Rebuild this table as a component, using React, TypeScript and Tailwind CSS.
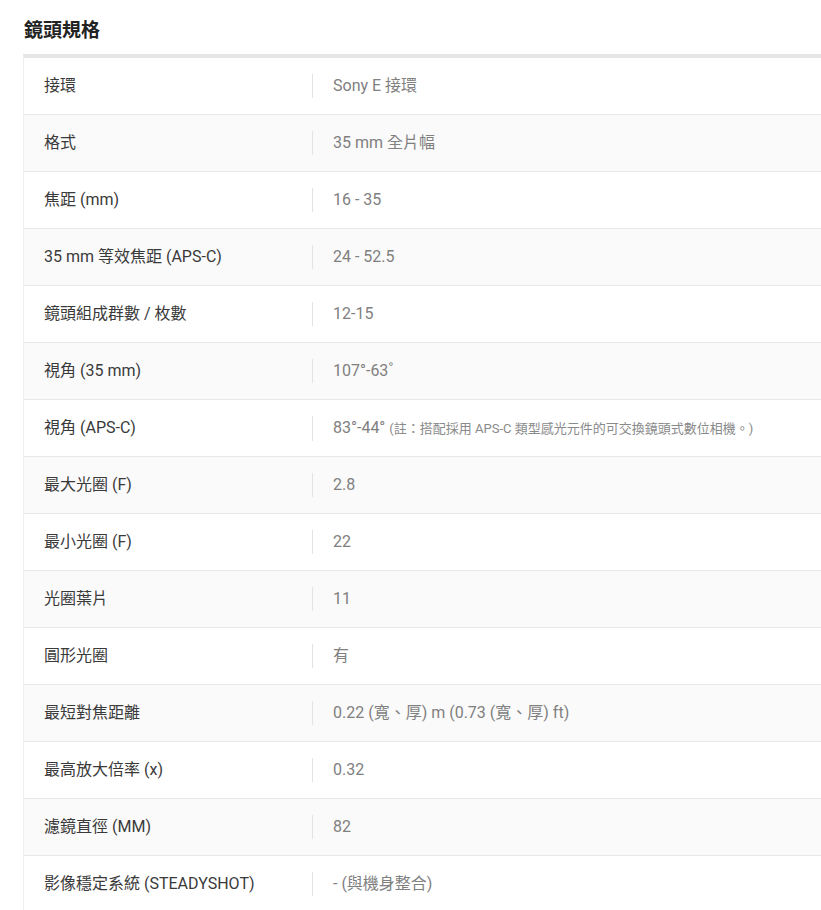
const specs: { label: string; value: string; note?: string }[] = [
  { label: "接環", value: "Sony E 接環" },
  { label: "格式", value: "35 mm 全片幅" },
  { label: "焦距 (mm)", value: "16 - 35" },
  { label: "35 mm 等效焦距 (APS-C)", value: "24 - 52.5" },
  { label: "鏡頭組成群數 / 枚數", value: "12-15" },
  { label: "視角 (35 mm)", value: "107°-63˚" },
  { label: "視角 (APS-C)", value: "83°-44°", note: "(註：搭配採用 APS-C 類型感光元件的可交換鏡頭式數位相機。)" },
  { label: "最大光圈 (F)", value: "2.8" },
  { label: "最小光圈 (F)", value: "22" },
  { label: "光圈葉片", value: "11" },
  { label: "圓形光圈", value: "有" },
  { label: "最短對焦距離", value: "0.22 (寬、厚) m (0.73 (寬、厚) ft)" },
  { label: "最高放大倍率 (x)", value: "0.32" },
  { label: "濾鏡直徑 (MM)", value: "82" },
  { label: "影像穩定系統 (STEADYSHOT)", value: "- (與機身整合)" },
];

export default function App() {
  return (
    <div className="min-h-screen bg-white pl-[23px] font-['Roboto','Noto_Sans_CJK_TC',sans-serif]">
      <h2 className="pt-[19px] pl-px text-[19px] font-bold leading-6 text-[#222]">鏡頭規格</h2>
      <div className="mt-[11px] border-t-4 border-l border-t-[#e6e6e6] border-l-[#efefef]">
        {specs.map((s, i) => (
          <div
            key={s.label}
            className={`flex h-[57px] items-center border-b border-[#e8e8e8] ${i % 2 === 1 ? "bg-[#fafafa]" : "bg-white"}`}
          >
            <div className="w-[288px] pl-5 text-[16px] leading-6 text-[#3a3a3a]">{s.label}</div>
            <div className="flex items-baseline border-l border-[#e3e3e3] pl-5 text-[16px] leading-6 text-[#808080]">
              {s.value}
              {s.note && <span className="ml-1 text-[13px] text-[#8a8a8a]">{s.note}</span>}
            </div>
          </div>
        ))}
      </div>
    </div>
  );
}
